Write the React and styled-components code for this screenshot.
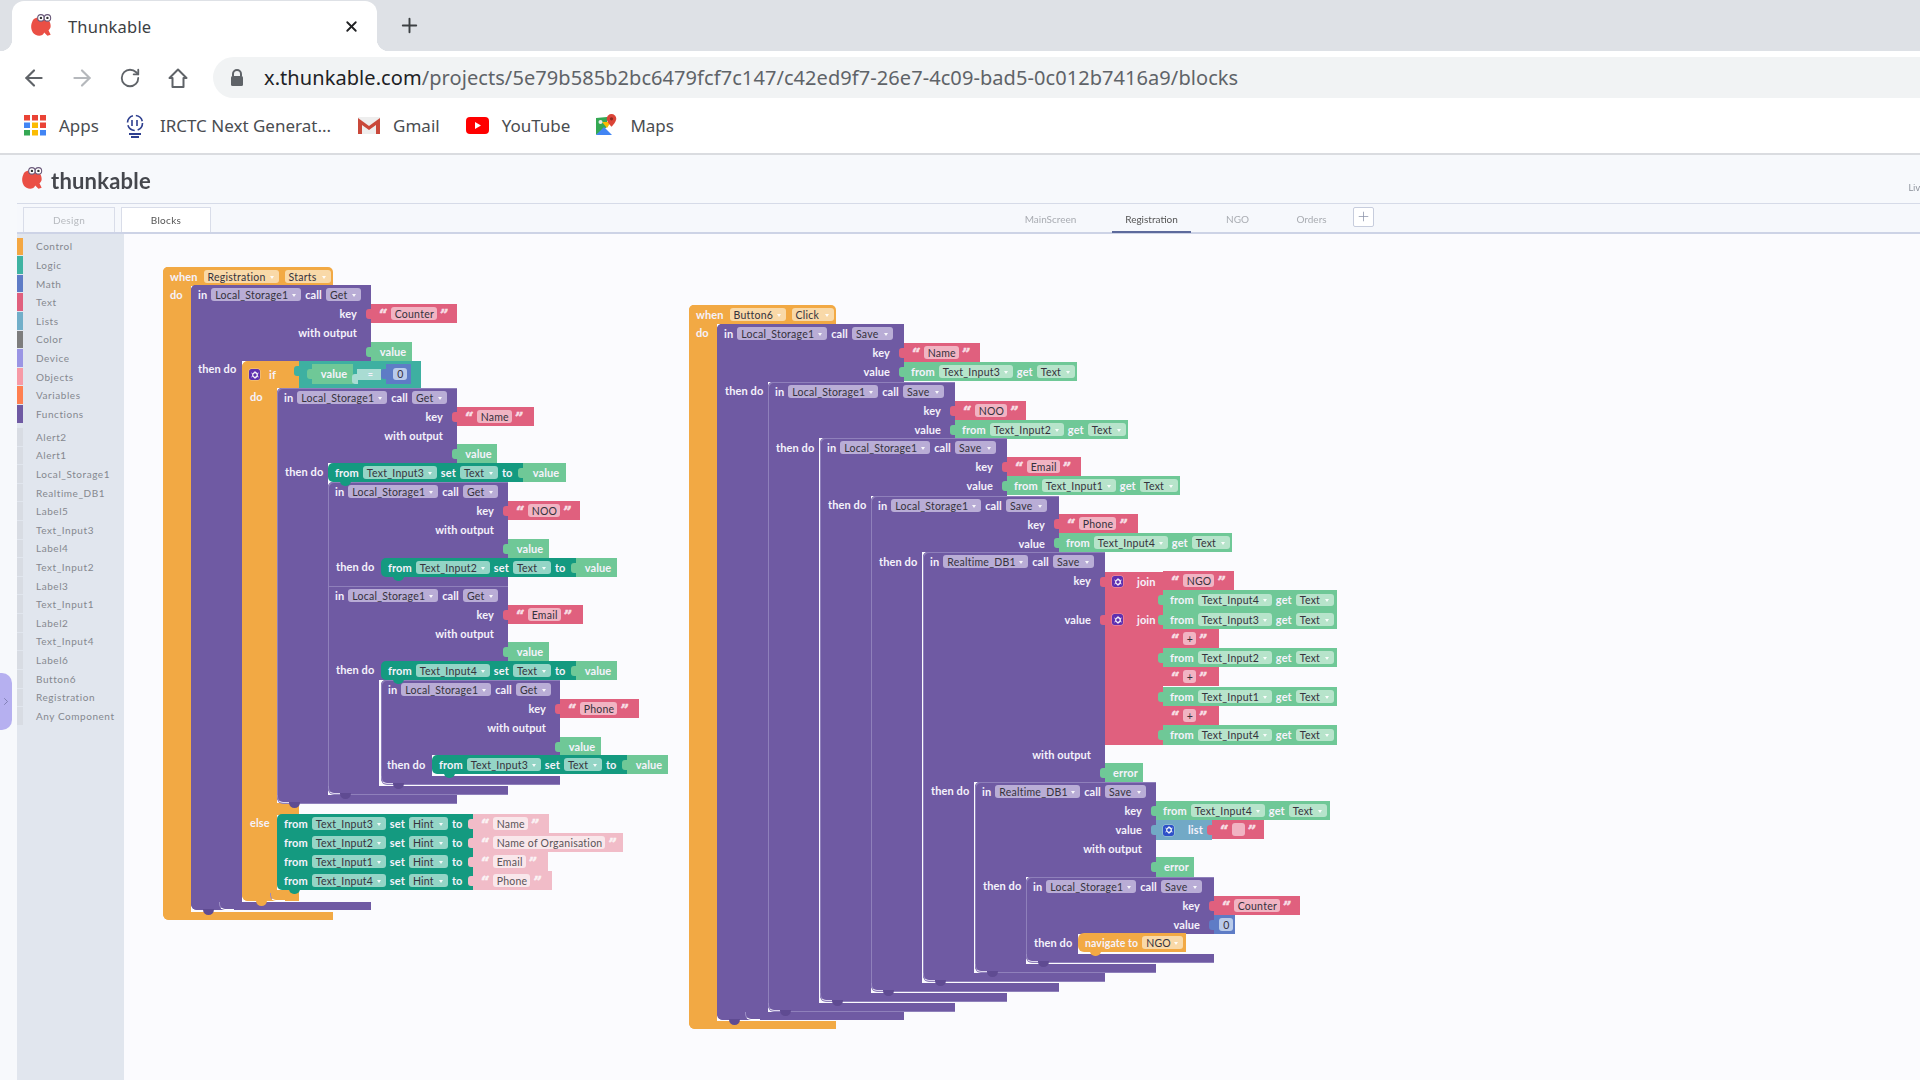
import React from 'react';
import styled, { createGlobalStyle } from 'styled-components';
import { ArrowLeft, ArrowRight, RotateCw, X, Plus, ChevronRight } from 'lucide-react';

const Global = createGlobalStyle`
  html, body { margin: 0; padding: 0; height: 100%; overflow: hidden; background: #f7f9fc; }
  #root { width: 1920px; height: 1080px; overflow: hidden; }
  * { box-sizing: border-box; }
`;

const C = {
  orange: '#f2a944', purple: '#6f5aa3', green: '#6fc897', pink: '#e0607e', teal: '#3eb0a1',
  dark: '#149a80', pale: '#f1bcc8', blue: '#5e7cc6', list: '#72a9c6',
};
const CHIP = {
  orange: '#f9d9a8', purple: '#b9add6', green: '#b7e4cb', pink: '#f1b4c3', teal: '#a9dcd3',
  dark: '#94d5c6', pale: '#f9e7eb', blue: '#b9cbea',
};

const Page = styled.div`
  width: 1920px; height: 1080px; display: flex; flex-direction: column;
  font-family: "Noto Sans", Roboto, sans-serif; filter: blur(0.35px);
`;
const TabStrip = styled.div`
  height: 51px; background: #dee1e6; display: flex; align-items: flex-end; flex: none;
`;
const BrowserTab = styled.div`
  position: relative; margin-left: 12px; width: 365px; height: 50px; background: #fff;
  border-radius: 12px 12px 0 0; display: flex; align-items: center; padding-left: 17px; gap: 13px;
  &::before, &::after { content: ''; position: absolute; bottom: 0; width: 12px; height: 12px; }
  &::before { left: -12px; background: radial-gradient(circle at 0 0, transparent 12px, #fff 12.5px); }
  &::after { right: -12px; background: radial-gradient(circle at 100% 0, transparent 12px, #fff 12.5px); }
`;
const TabTitle = styled.span`
  font-size: 16.5px; color: #3c4043; flex: 1; letter-spacing: .2px;
`;
const TabClose = styled.span`
  display: flex; margin-right: 17px; color: #202124;
`;
const NewTab = styled.span`
  display: flex; margin: 0 0 14px 21px; color: #3c4043;
`;
const Toolbar = styled.div`
  height: 53px; background: #fff; display: flex; align-items: center; padding-left: 10px; flex: none;
`;
const NavBtn = styled.span`
  width: 48px; display: flex; justify-content: center; color: ${p => (p.$off ? '#b5b8bc' : '#5f6368')};
`;
const UrlPill = styled.div`
  flex: 1; height: 41px; margin-left: 11px; background: #f1f3f4; border-radius: 21px 0 0 21px;
  display: flex; align-items: center; padding-left: 17px; gap: 20px;
`;
const Url = styled.div`
  font-size: 20px; color: #5f6368; letter-spacing: .07px; white-space: nowrap;
  b { font-weight: 400; color: #202124; }
`;
const Bookmarks = styled.div`
  height: 51px; background: #fff; border-bottom: 2px solid #dadce0; display: flex; align-items: center;
  padding: 0 0 7px 24px; flex: none;
`;
const Mark = styled.div`
  display: flex; align-items: center; gap: 13px; margin-right: ${p => p.$gap}px;
  font-size: 17px; color: #4a4d51;
`;
const AppBody = styled.div`
  flex: 1; display: flex; flex-direction: column; background: #f7f9fc; padding-left: 17px; min-height: 0;
`;
const Header = styled.div`
  height: 48px; margin-left: 3px; display: flex; align-items: center; gap: 5px; flex: none;
`;
const Brand = styled.div`
  font-family: Lato, sans-serif; font-weight: 700; font-size: 22px; color: #45474d; letter-spacing: .2px;
  margin-top: 2px;
`;
const LiveTag = styled.div`
  margin-left: auto; white-space: nowrap; font-size: 9px; color: #8b9099;
  align-self: flex-end; margin-bottom: 9px;
`;
const TabRow = styled.div`
  height: 31px; flex: none; display: flex; align-items: flex-end; padding-left: 6px;
  border-top: 1.5px solid #d6dbe8; border-bottom: 2px solid #cdd3e6; background: #f6f8fc;
`;
const ModeTab = styled.div`
  width: ${p => p.$w}px; height: 25px; margin-right: 6px; display: flex; align-items: center; justify-content: center;
  font-family: Lato, sans-serif; font-size: 10px; letter-spacing: .3px;
  border: 1px solid #d9dde9; border-bottom: 0;
  color: ${p => (p.$on ? '#555' : '#b7babf')}; background: ${p => (p.$on ? '#fff' : '#f6f8fc')};
`;
const ScreenTabs = styled.div`
  margin-left: 796px; display: flex; align-items: flex-end; height: 100%; gap: 24px;
`;
const ScreenTab = styled.div`
  height: 100%; padding: 2px 12px 0; width: ${p => p.$w}px; justify-content: center; display: flex; align-items: center; font-family: Lato, sans-serif;
  font-size: 10px; color: ${p => (p.$on ? '#555' : '#a9acb2')}; white-space: nowrap;
  border-bottom: ${p => (p.$on ? '2px solid #5d6a9c' : '2px solid transparent')}; margin-bottom: -1px;
`;
const AddScreen = styled.div`
  width: 21px; height: 20px; align-self: center; margin-left: -10px; margin-bottom: 3px; border: 1px solid #c7cddd; border-radius: 2px;
  background: #fff; color: #8a91a8; display: flex; align-items: center; justify-content: center;
`;
const Main = styled.div`
  flex: 1; display: flex; min-height: 0; margin-left: 0;
`;
const Sidebar = styled.div`
  width: 107px; flex: none; background: #e1e6ee; padding: 3px 0 0 0; display: flex; flex-direction: column;
`;
const SideItem = styled.div`
  height: 18.62px; display: flex; align-items: center; gap: 13px;
  font-family: Lato, sans-serif; font-size: 10px; letter-spacing: .55px; color: #85888e;
  margin-top: ${p => p.$mt || 0}px; white-space: nowrap;
  &::before { content: ''; width: 6px; height: 17.6px; background: ${p => p.$c}; flex: none; }
`;
const Canvas = styled.div`
  position: relative; flex: 1; background: #fbfbfe; overflow: hidden;
`;
const Drawer = styled.div`
  position: absolute; left: 0; top: 673px; width: 12px; height: 57px; background: #b6b0f0;
  border-radius: 0 10px 10px 0; display: flex; align-items: center; justify-content: center; color: #6c6d9e; z-index: 2;
`;

/* ---- blocks: nodes placed on Blockly's free canvas ---- */
const at = p => `left:${p.$x - 124}px; top:${p.$y - 234}px; width:${p.$w}px;`;
const Hat = styled.div`
  position: absolute; ${at} height: ${p => p.$h}px; background: ${p => p.$bg};
  border-radius: ${p => p.$r || '0'}; display: flex; align-items: center; padding-left: 7px; gap: ${p => p.$gap || 6}px;
`;
const Spine = styled.div`
  position: absolute; ${at} height: ${p => p.$h}px; background: ${p => p.$bg};
  border-radius: ${p => p.$r || '0'};
  ${p => p.$nested && 'border-left: 1px solid #8f80bb;'}
`;
const Foot = styled.div`
  position: absolute; ${at} height: ${p => p.$h || 8}px; background: ${p => p.$bg};
  border-radius: 0 0 0 6px;
  ${p => p.$nested && 'box-shadow: 0 1px 0 #8f80bb;'}
  &::before {
    content: ''; position: absolute; left: ${p => (p.$nested ? 0 : 28)}px; bottom: 0; width: 14px; height: 7px;
    border-left: 1px solid #9a8cc4; border-bottom: 1.5px solid ${p => (p.$nested ? '#ddd6ee' : '#fff')}; border-radius: 0 0 0 6px;
    display: ${p => (p.$bump ? 'block' : 'none')};
  }
  &::after {
    content: ''; position: absolute; left: ${p => p.$bx || 12}px; bottom: -5px; width: 11px; height: 6px;
    background: ${p => p.$bump || 'transparent'}; border-radius: 0 0 6px 6px;
  }
`;
const Head = styled.div`
  position: absolute; ${at} height: ${p => p.$h}px; background: ${C.purple}; display: flex; flex-direction: column;
  border-radius: ${p => (p.$flat ? '0' : '5px 0 0 0')};
  ${p => p.$nested && 'box-shadow: inset 1px 1px 0 #8f80bb;'}
`;
const InRow = styled.div`
  height: 19px; display: flex; align-items: center; gap: 4px; padding-left: 7px; flex: none;
`;
const SlotRow = styled.div`
  height: ${p => p.$h || 19}px; display: flex; align-items: center; justify-content: flex-end; padding-right: 14px; flex: none;
`;
const Label = styled.span`
  font-family: Lato, sans-serif; font-weight: 700; font-size: ${p => p.$fs || 11}px; color: #f5f2fb; white-space: nowrap;
  letter-spacing: .1px; line-height: 12px;
`;
const Caption = styled(Label)`
  position: absolute; left: ${p => p.$x - 124}px; top: ${p => p.$y - 234 - 6}px;
`;
const Chip = styled.span`
  display: inline-flex; align-items: center; justify-content: ${p => (p.$plain ? 'center' : 'space-between')};
  height: 12.5px; padding: 0 ${p => (p.$plain ? 3 : 5)}px 0 4px;
  ${p => p.$w && `width: ${p.$w}px;`}
  border-radius: 3px; background: ${p => CHIP[p.$on]}; flex: none;
  font-family: Lato, sans-serif; font-size: 10.5px; letter-spacing: .25px; color: ${p => (p.$on === 'pale' ? '#5a5458' : '#35323c')}; white-space: nowrap; line-height: 12px;
  ${p => !p.$plain && `&::after { content: ''; border: 2.5px solid transparent; border-top: 3px solid rgba(255,255,255,.9); margin: 3px 0 0 3px; flex: none; }`}
`;
const Out = styled.div`
  position: absolute; ${at} height: ${p => p.$h || 19}px; background: ${p => p.$bg};
  display: flex; align-items: ${p => (p.$top ? 'flex-start' : 'center')}; gap: ${p => p.$gap || 4}px; padding-left: ${p => p.$pl || 7}px;
  ${p => p.$top && 'padding-top: 4px;'}
  justify-content: ${p => (p.$center ? 'center' : 'flex-start')};
  ${p => p.$center && 'padding-left: 3px;'}
  &::before {
    content: ''; position: absolute; left: -5px; top: 4.5px; width: 6px; height: 10px;
    background: ${p => p.$tab || p.$bg}; border-radius: 3px 0 0 3px;
  }
`;
const Stmt = styled.div`
  position: absolute; ${at} height: 19px; background: ${p => p.$bg}; border-radius: ${p => p.$r || '5px 0 0 5px'};
  display: flex; align-items: center; gap: 4px; padding-left: 7px;
  &::after {
    content: ''; position: absolute; left: 12px; bottom: -4px; width: 11px; height: 5px;
    background: ${p => p.$bg}; border-radius: 0 0 6px 6px;
  }
`;
const Quote = styled.span`
  font-family: "DejaVu Serif", "Liberation Serif", serif; font-weight: 700; font-size: 15px; line-height: 16px; height: 16px;
  margin-top: 3px; color: ${p => p.$c || '#f8dfe5'}; -webkit-text-stroke: .6px ${p => p.$c || '#f8dfe5'};
`;
const Mutator = styled.span`
  width: 11px; height: 11px; border-radius: 2.5px; background: ${p => p.$c}; flex: none; display: flex;
  align-items: center; justify-content: center; box-shadow: 0 0 0 .5px #ffffff66;
`;

const Gear = () => (
  <svg width="8" height="8" viewBox="0 0 8 8"><circle cx="4" cy="4" r="2.3" fill="none" stroke="#fff" strokeWidth="1.2" /><path d="M4 0v1.4M4 6.6V8M.4 2l1.3.7M6.3 5.3l1.3.7M.4 6l1.3-.7M6.3 2.7L7.6 2" stroke="#fff" strokeWidth=".8" /></svg>
);

const Row = ({ r }) => Array.isArray(r) ? <SlotRow $h={r[1]}><Label>{r[0]}</Label></SlotRow> : <SlotRow><Label>{r}</Label></SlotRow>;

const InLine = ({ comp, method, w = 90, mw = 35 }) => (
  <InRow>
    <Label>in</Label>
    <Chip $on="purple" $w={w}>{comp}</Chip>
    <Label>call</Label>
    <Chip $on="purple" $w={mw}>{method}</Chip>
  </InRow>
);

const Call = ({ x, y, w, end, foot, comp, method, rows, spine = 51, nested = true, cw, mw, footBump = '#5f4b92' }) => (
  <>
    <Spine $x={x} $y={y} $w={spine} $h={foot + 8 - y} $bg={C.purple} $r="5px 0 0 6px" $nested={nested} />
    <Head $x={x} $y={y} $w={w} $h={end - y} $nested={nested}>
      <InLine comp={comp} method={method} w={cw} mw={mw} />
      {rows.map((r, i) => <Row key={i} r={r} />)}
    </Head>
    <Foot $x={x} $y={foot} $w={w} $bg={C.purple} $bump={footBump} $nested={nested} />
  </>
);

const QuoteBlock = ({ x, y, w, text, bg = C.pink, kind = 'pink', qc, tab, pl = 8, gap = 3, chipW }) => (
  <Out $x={x} $y={y} $w={w} $bg={bg} $pl={pl} $gap={gap} $tab={tab}>
    <Quote $c={qc}>“</Quote>
    <Chip $on={kind} $plain $w={chipW}>{text}</Chip>
    <Quote $c={qc}>”</Quote>
  </Out>
);
const Get = ({ x, y, comp, w = 173, h }) => (
  <Out $x={x} $y={y} $w={w} $h={h} $bg={C.green}>
    <Label>from</Label>
    <Chip $on="green" $w={74}>{comp}</Chip>
    <Label>get</Label>
    <Chip $on="green" $w={38}>Text</Chip>
  </Out>
);
const Val = ({ x, y, w = 41, text = 'value', h }) => (
  <Out $x={x} $y={y} $w={w} $h={h} $bg={C.green} $center><Label>{text}</Label></Out>
);
const SetText = ({ x, y, comp, vw = 41 }) => (
  <>
    <Stmt $x={x} $y={y} $w={195} $bg={C.dark}>
      <Label>from</Label>
      <Chip $on="dark" $w={74}>{comp}</Chip>
      <Label>set</Label>
      <Chip $on="dark" $w={38}>Text</Chip>
      <Label>to</Label>
    </Stmt>
    <Val x={x + 195} y={y} w={vw} />
  </>
);
const SetHint = ({ y, comp, text, w, chipW }) => (
  <>
    <Stmt $x={277} $y={y} $w={196} $bg={C.dark} $r={y === 814 ? '5px 0 0 0' : y === 871 ? '0 0 0 5px' : '0'}>
      <Label>from</Label>
      <Chip $on="dark" $w={74}>{comp}</Chip>
      <Label>set</Label>
      <Chip $on="dark" $w={39}>Hint</Chip>
      <Label>to</Label>
    </Stmt>
    <QuoteBlock x={473} y={y} w={w} text={text} bg={C.pale} kind="pale" qc="#fbf3f5" chipW={chipW} />
  </>
);

const Program1 = () => (
  <>
    <Spine $x={163} $y={267} $w={28} $h={653} $bg={C.orange} $r="5px 0 0 6px" />
    <Hat $x={163} $y={267} $w={170} $h={19} $bg={C.orange} $r="5px 5px 0 0">
      <Label>when</Label>
      <Chip $on="orange" $w={75}>Registration</Chip>
      <Chip $on="orange" $w={46}>Starts</Chip>
    </Hat>
    <Foot $x={163} $y={912} $w={170} $bg={C.orange} />
    <Caption $x={170} $y={295}>do</Caption>

    <Call x={191} y={285} w={180} end={361} foot={902} comp="Local_Storage1" method="Get" rows={['key', 'with output']} nested={false} />
    <QuoteBlock x={371} y={304} w={86} text="Counter" />
    <Val x={371} y={342} />
    <Caption $x={198} $y={369}>then do</Caption>

    <Spine $x={242} $y={361} $w={35} $h={540} $bg={C.orange} $r="6px 0 0 6px" />
    <Hat $x={242} $y={361} $w={57} $h={27} $bg={C.orange} $r="6px 0 0 0" $gap={9}>
      <Mutator $c="#5e2fb0"><Gear /></Mutator>
      <Label>if</Label>
    </Hat>
    <Foot $x={242} $y={890} $w={57} $h={11} $bg={C.orange} $bump={C.orange} $bx={14} />
    <Spine $x={277} $y={803} $w={22} $h={12} $bg={C.orange} />
    <Caption $x={250} $y={397}>do</Caption>
    <Caption $x={250} $y={823}>else</Caption>

    <Out $x={299} $y={361} $w={122} $h={27} $bg={C.teal} />
    <Out $x={312} $y={364} $w={41} $h={20} $bg={C.green} $center><Label>value</Label></Out>
    <Out $x={357} $y={369} $w={24} $h={11} $bg={CHIP.teal} $center><Label $fs={9}>=</Label></Out>
    <Out $x={386} $y={364} $w={25} $h={20} $bg={C.blue} $center><Chip $on="blue" $plain>0</Chip></Out>

    <Call x={277} y={388} w={180} end={463} foot={795} comp="Local_Storage1" method="Get" rows={['key', 'with output']} />
    <QuoteBlock x={457} y={407} w={77} text="Name" />
    <Val x={457} y={444} w={40} />
    <Caption $x={285} $y={472}>then do</Caption>

    <Call x={328} y={482} w={180} end={586} foot={786} comp="Local_Storage1" method="Get" rows={['key', 'with output']} />
    <QuoteBlock x={508} y={501} w={72} text="NOO" />
    <Val x={508} y={539} />
    <Caption $x={336} $y={567}>then do</Caption>
    <SetText x={328} y={463} comp="Text_Input3" vw={43} />
    <SetText x={381} y={558} comp="Text_Input2" />
    <Head $x={328} $y={586} $w={180} $h={94} $flat $nested>
      <InLine comp="Local_Storage1" method="Get" />
      <Row r="key" />
      <Row r="with output" />
    </Head>
    <QuoteBlock x={508} y={605} w={75} text="Email" />
    <Val x={508} y={642} />
    <Caption $x={336} $y={670}>then do</Caption>

    <Call x={381} y={680} w={179} end={755} foot={776} comp="Local_Storage1" method="Get" rows={['key', 'with output']} />
    <SetText x={381} y={661} comp="Text_Input4" />
    <QuoteBlock x={560} y={699} w={79} text="Phone" />
    <Val x={560} y={737} />
    <Caption $x={387} $y={765}>then do</Caption>
    <SetText x={432} y={755} comp="Text_Input3" />

    <SetHint y={814} comp="Text_Input3" text="Name" w={76} />
    <SetHint y={833} comp="Text_Input2" text="Name of Organisation" w={150} />
    <SetHint y={852} comp="Text_Input1" text="Email" w={75} />
    <SetHint y={871} comp="Text_Input4" text="Phone" w={79} />
  </>
);

const Program2 = () => (
  <>
    <Spine $x={689} $y={305} $w={28} $h={724} $bg={C.orange} $r="5px 0 0 6px" />
    <Hat $x={689} $y={305} $w={147} $h={19} $bg={C.orange} $r="5px 5px 0 0">
      <Label>when</Label>
      <Chip $on="orange" $w={56}>Button6</Chip>
      <Chip $on="orange" $w={42}>Click</Chip>
    </Hat>
    <Foot $x={689} $y={1021} $w={147} $bg={C.orange} />
    <Caption $x={696} $y={333}>do</Caption>

    <Call x={717} y={324} w={187} end={382} foot={1012} comp="Local_Storage1" method="Save" mw={41} rows={['key', 'value']} nested={false} />
    <QuoteBlock x={904} y={343} w={76} text="Name" />
    <Get x={904} y={362} comp="Text_Input3" />
    <Caption $x={725} $y={391}>then do</Caption>

    <Call x={768} y={382} w={187} end={438} foot={1003} comp="Local_Storage1" method="Save" mw={41} rows={['key', 'value']} />
    <QuoteBlock x={955} y={401} w={71} text="NOO" />
    <Get x={955} y={420} comp="Text_Input2" />
    <Caption $x={776} $y={448}>then do</Caption>

    <Call x={820} y={438} w={187} end={496} foot={993} comp="Local_Storage1" method="Save" mw={41} rows={['key', 'value']} />
    <QuoteBlock x={1007} y={457} w={74} text="Email" />
    <Get x={1007} y={476} comp="Text_Input1" />
    <Caption $x={828} $y={505}>then do</Caption>

    <Call x={871} y={496} w={188} end={552} foot={983} comp="Local_Storage1" method="Save" mw={41} rows={['key', 'value']} />
    <QuoteBlock x={1059} y={514} w={79} text="Phone" />
    <Get x={1059} y={533} comp="Text_Input4" />
    <Caption $x={879} $y={562}>then do</Caption>

    <Call x={923} y={552} w={182} end={782} foot={973} comp="Realtime_DB1" method="Save" cw={85} mw={41}
      rows={['key', ['', 20], 'value', ['', 116], 'with output']} />

    <Out $x={1105} $y={572} $w={58} $h={38} $bg={C.pink} $pl={7} $gap={14} $top>
      <Mutator $c="#5e2fb0"><Gear /></Mutator><Label>join</Label>
    </Out>
    <Out $x={1105} $y={610} $w={58} $h={135} $bg={C.pink} $pl={7} $gap={14} $top>
      <Mutator $c="#5e2fb0"><Gear /></Mutator><Label>join</Label>
    </Out>
    <QuoteBlock x={1163} y={571} w={71} text="NGO" />
    <Get x={1163} y={590} comp="Text_Input4" w={174} h={20} />
    <Get x={1163} y={610} comp="Text_Input3" w={174} />
    <QuoteBlock x={1163} y={629} w={56} text="+" />
    <Get x={1163} y={648} comp="Text_Input2" w={174} />
    <QuoteBlock x={1163} y={667} w={56} text="+" />
    <Get x={1163} y={687} comp="Text_Input1" w={174} />
    <QuoteBlock x={1163} y={706} w={56} text="+" />
    <Get x={1163} y={725} comp="Text_Input4" w={174} h={20} />
    <Val x={1105} y={763} w={38} text="error" h={20} />
    <Caption $x={931} $y={791}>then do</Caption>

    <Call x={975} y={782} w={181} end={877} foot={964} comp="Realtime_DB1" method="Save" cw={85} mw={41}
      rows={['key', 'value', 'with output']} />
    <Get x={1156} y={801} comp="Text_Input4" w={174} />
    <Out $x={1156} $y={820} $w={56} $h={20} $bg={C.list} $pl={7} $gap={14}>
      <Mutator $c="#2d50c8"><Gear /></Mutator><Label>list</Label>
    </Out>
    <QuoteBlock x={1212} y={820} w={52} text={'\u00a0'} chipW={13} />
    <Val x={1156} y={857} w={38} text="error" h={20} />
    <Caption $x={983} $y={886}>then do</Caption>

    <Call x={1026} y={877} w={188} end={934} foot={954} spine={52} comp="Local_Storage1" method="Save" mw={41} rows={['key', 'value']} />
    <QuoteBlock x={1214} y={896} w={86} text="Counter" />
    <Out $x={1214} $y={915} $w={21} $bg={C.blue} $center><Chip $on="blue" $plain>0</Chip></Out>
    <Caption $x={1034} $y={943}>then do</Caption>
    <Stmt $x={1078} $y={933} $w={108} $bg={C.orange} $r="6px 0 0 6px">
      <Label $fs={10.5}>navigate to</Label>
      <Chip $on="orange" $w={41}>NGO</Chip>
    </Stmt>
  </>
);

const Blob = ({ size = 26 }) => (
  <svg width={size} height={size} viewBox="0 0 24 24">
    <path d="M11 4c5 0 9 3 9 8 0 2-1 3-2 4l2 4-3 1-3-3c-1 3-5 4-8 2-4-2-5-8-3-12 1-3 4-4 8-4z" fill="#ea4f45" />
    <circle cx="11" cy="4.5" r="3" fill="#fff" stroke="#6a5a7a" strokeWidth="1" />
    <circle cx="17" cy="4.5" r="3" fill="#fff" stroke="#6a5a7a" strokeWidth="1" />
    <circle cx="11" cy="4.5" r="1.1" fill="#333" /><circle cx="17" cy="4.5" r="1.1" fill="#333" />
  </svg>
);
const Lock = () => (
  <svg width="14" height="18" viewBox="0 0 14 18"><path d="M3 7V5a4 4 0 018 0v2" fill="none" stroke="#5f6368" strokeWidth="2" /><rect x="1" y="7" width="12" height="10" rx="1.5" fill="#5f6368" /></svg>
);
const HomeIcon = () => (
  <svg width="22" height="22" viewBox="0 0 22 22" fill="none" stroke="#5f6368" strokeWidth="2"><path d="M11 2.5L2.5 11H5.5V20H16.5V11H19.5Z" strokeLinejoin="round" /></svg>
);
const AppsIcon = () => (
  <svg width="22" height="21" viewBox="0 0 22 21">
    {[['#ea4335', '#ea4335', '#ea4335'], ['#4285f4', '#fbbc04', '#ea4335'], ['#34a853', '#fbbc04', '#4285f4']].map((row, j) => row.map((c, i) => (
      <rect key={`${i}${j}`} x={i * 8} y={j * 7.5} width="6" height="5.5" fill={c} />
    )))}
  </svg>
);
const IrctcIcon = () => (
  <svg width="24" height="26" viewBox="0 0 24 26" fill="none" stroke="#2e3f8f">
    <circle cx="12" cy="11" r="7.5" strokeWidth="1.6" strokeDasharray="9 3" />
    <path d="M9 8v6M14 8v6" strokeWidth="1.6" /><path d="M6 22h12M8 25h8" strokeWidth="2" />
  </svg>
);
const GmailIcon = () => (
  <svg width="22" height="17" viewBox="0 0 22 17">
    <rect x="0" y="0" width="22" height="17" fill="#eeeeee" />
    <path d="M0 17V1l11 8 11-8v16h-4V8l-7 5-7-5v9z" fill="#c9483a" />
  </svg>
);
const YouTubeIcon = () => (
  <svg width="23" height="17" viewBox="0 0 23 17"><rect width="23" height="17" rx="4" fill="#f00" /><path d="M9 5l6 3.5-6 3.5z" fill="#fff" /></svg>
);
const MapsIcon = () => (
  <svg width="21" height="22" viewBox="0 0 21 22">
    <path d="M0 4l11-1v10L0 21z" fill="#34a853" /><path d="M0 21l8-8 8 8z" fill="#4285f4" /><path d="M6 8l9 0-4 6z" fill="#fbbc04" />
    <circle cx="4.5" cy="8" r="2" fill="#e8eaed" />
    <path d="M15.5 0a4.8 4.8 0 014.8 4.8c0 3.2-4.8 8-4.8 8s-4.8-4.8-4.8-8A4.8 4.8 0 0115.5 0z" fill="#db4437" /><circle cx="15.5" cy="4.8" r="1.6" fill="#8c2a20" />
  </svg>
);

const categories = [
  ['Control', '#f4a742'], ['Logic', '#3fb3a2'], ['Math', '#5e7cc6'], ['Text', '#e0607e'], ['Lists', '#72afc9'],
  ['Color', '#7d7d7d'], ['Device', '#9a95e4'], ['Objects', '#f79aa6'], ['Variables', '#ff7f50'], ['Functions', '#6f5aa3'],
];
const comps = ['Alert2', 'Alert1', 'Local_Storage1', 'Realtime_DB1', 'Label5', 'Text_Input3', 'Label4', 'Text_Input2', 'Label3', 'Text_Input1', 'Label2', 'Text_Input4', 'Label6', 'Button6', 'Registration', 'Any Component'];

export default function App() {
  return (
    <Page>
      <Global />
      <TabStrip>
        <BrowserTab>
          <Blob />
          <TabTitle>Thunkable</TabTitle>
          <TabClose><X size={17} strokeWidth={2.6} /></TabClose>
        </BrowserTab>
        <NewTab><Plus size={23} strokeWidth={2} /></NewTab>
      </TabStrip>
      <Toolbar>
        <NavBtn><ArrowLeft size={26} strokeWidth={2} /></NavBtn>
        <NavBtn $off><ArrowRight size={26} strokeWidth={2} /></NavBtn>
        <NavBtn><RotateCw size={22} strokeWidth={2} /></NavBtn>
        <NavBtn><HomeIcon /></NavBtn>
        <UrlPill>
          <Lock />
          <Url><b>x.thunkable.com</b>/projects/5e79b585b2bc6479fcf7c147/c42ed9f7-26e7-4c09-bad5-0c012b7416a9/blocks</Url>
        </UrlPill>
      </Toolbar>
      <Bookmarks>
        <Mark $gap={24}><AppsIcon />Apps</Mark>
        <Mark $gap={27}><IrctcIcon />IRCTC Next Generat...</Mark>
        <Mark $gap={26}><GmailIcon />Gmail</Mark>
        <Mark $gap={26}><YouTubeIcon />YouTube</Mark>
        <Mark $gap={0}><MapsIcon />Maps</Mark>
      </Bookmarks>
      <AppBody>
        <Header>
          <Blob />
          <Brand>thunkable</Brand>
          <LiveTag>Liv</LiveTag>
        </Header>
        <TabRow>
          <ModeTab $w={92}>Design</ModeTab>
          <ModeTab $w={90} $on>Blocks</ModeTab>
          <ScreenTabs>
            <ScreenTab $w={75}>MainScreen</ScreenTab>
            <ScreenTab $w={79} $on>Registration</ScreenTab>
            <ScreenTab $w={45}>NGO</ScreenTab>
            <ScreenTab $w={55}>Orders</ScreenTab>
            <AddScreen><Plus size={15} strokeWidth={1.2} /></AddScreen>
          </ScreenTabs>
        </TabRow>
        <Main>
          <Sidebar>
            {categories.map(([name, c]) => <SideItem key={name} $c={c}>{name}</SideItem>)}
            {comps.map((name, i) => <SideItem key={name} $c="#d8dce3" $mt={i === 0 ? 4.4 : 0}>{name}</SideItem>)}
          </Sidebar>
          <Canvas>
            <Program1 />
            <Program2 />
          </Canvas>
        </Main>
      </AppBody>
      <Drawer><ChevronRight size={13} strokeWidth={1.4} /></Drawer>
    </Page>
  );
}
